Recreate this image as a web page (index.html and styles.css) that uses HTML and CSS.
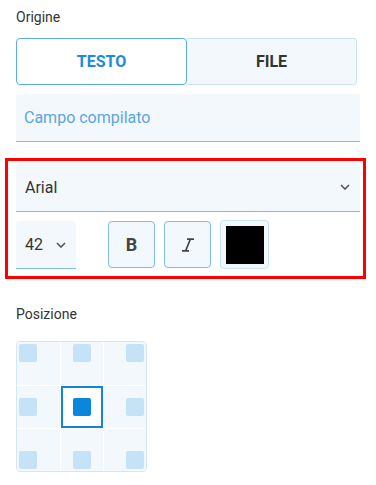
FILE: index.html
```html
<!DOCTYPE html>
<html lang="it">
<head>
<meta charset="utf-8">
<link rel="stylesheet" href="styles.css">
</head>
<body>
<div class="panel">
  <div class="label">Origine</div>
  <div class="toggle">
    <button class="tog active">TESTO</button>
    <button class="tog">FILE</button>
  </div>
  <div class="field">Campo compilato</div>

  <div class="highlight">
    <div class="select font-select">
      <span>Arial</span>
      <svg class="chev" width="10" height="6" viewBox="0 0 10 6"><path d="M1 1l4 4 4-4" fill="none" stroke="#555" stroke-width="1.6"/></svg>
    </div>
    <div class="row">
      <div class="select size-select">
        <span>42</span>
        <svg class="chev" width="10" height="6" viewBox="0 0 10 6"><path d="M1 1l4 4 4-4" fill="none" stroke="#555" stroke-width="1.6"/></svg>
      </div>
      <button class="sq bold">B</button>
      <button class="sq italic" aria-label="Corsivo">
        <svg width="14" height="14" viewBox="0 0 14 14"><path d="M6 1.2h7M1 12.8h7M9.3 1.2L4.7 12.8" fill="none" stroke="#444" stroke-width="1.7"/></svg>
      </button>
      <div class="sq color"><div class="swatch"></div></div>
    </div>
  </div>

  <div class="label pos-label">Posizione</div>
  <div class="grid">
    <div class="cell tl"><i></i></div>
    <div class="cell tc"><i></i></div>
    <div class="cell tr"><i></i></div>
    <div class="cell ml"><i></i></div>
    <div class="cell mc sel"><i></i></div>
    <div class="cell mr"><i></i></div>
    <div class="cell bl"><i></i></div>
    <div class="cell bc"><i></i></div>
    <div class="cell br"><i></i></div>
  </div>
</div>
</body>
</html>
```

FILE: styles.css
```css
* { box-sizing: border-box; }
html, body { margin: 0; padding: 0; background: #fff; }
body { font-family: Roboto, "Noto Sans", sans-serif; color: #333; }
.panel { width: 376px; padding: 9px 16px 0 16px; }
.label { font-size: 14px; line-height: 16px; color: #333; font-weight: 400; }
.toggle { display: flex; margin-top: 13px; width: 341px; height: 47px; }
.tog {
  flex: 1; font-family: Roboto, sans-serif; font-weight: 700; font-size: 16px;
  border: 1px solid #c9e3f6; background: #f3f8fc; color: #333; padding: 0;
}
.tog:first-child { border-radius: 4px 0 0 4px; }
.tog:last-child { border-radius: 0 4px 4px 0; border-left: none; }
.tog.active { background: #fff; color: #1c8ae0; border: 1.5px solid #5aaee8; border-radius: 4px; }
.field {
  margin-top: 9px; width: 344px; height: 48px; background: #f3f8fc;
  border-bottom: 1px solid #7fbde8; color: #5aa6df; font-size: 16px;
  padding: 0 8px; display: flex; align-items: center;
}
.highlight {
  margin: 16px 0 0 -11px; width: 361px; height: 121px;
  border: 3px solid #f00; padding: 2px 4px 0 8px;
}
.select {
  background: #f3f8fc; border-bottom: 1px solid #7fbde8; border-radius: 4px 4px 0 0;
  display: flex; align-items: center; justify-content: space-between;
  font-size: 16px; color: #333; padding: 0 9px;
}
.font-select { height: 49px; width: 344px; }
.font-select .chev { margin-right: 1px; }
.row { display: flex; align-items: center; margin-top: 8px; height: 49px; }
.size-select { width: 60px; height: 48px; padding: 0 10px 0 9px; align-self: flex-start; margin-top: 1px; }
.sq {
  width: 47px; height: 47px; border: 1px solid #7fbde8; border-radius: 4px;
  background: #f3f8fc; padding: 0; color: #444; font-size: 18px;
  display: flex; align-items: center; justify-content: center;
}
.bold { margin-left: 32px; font-family: Roboto, sans-serif; font-weight: 700; }
.italic { margin-left: 9px; }
.color { margin-left: 9px; border-color: #c9e3f6; width: 49px; height: 49px; }
.swatch { width: 38px; height: 38px; background: #000; }
.pos-label { margin-top: 27px; }
.grid {
  margin-top: 19px; width: 131px; height: 131px;
  display: grid; grid-template-columns: 43px 42px 42px; grid-template-rows: 43px 42px 42px;
  border: 1px solid #d2e7f7; border-radius: 4px; background: #fff; gap: 1px; overflow: hidden;
}
.cell { background: #f3f8fc; display: flex; padding: 2px; }
.cell i { display: block; width: 18px; height: 18px; background: #c5e2f7; border-radius: 2px; }
.tl { justify-content: flex-start; align-items: flex-start; }
.tc { justify-content: center; align-items: flex-start; }
.tr { justify-content: flex-end; align-items: flex-start; }
.ml { justify-content: flex-start; align-items: center; }
.mc { justify-content: center; align-items: center; }
.mr { justify-content: flex-end; align-items: center; }
.bl { justify-content: flex-start; align-items: flex-end; }
.bc { justify-content: center; align-items: flex-end; }
.br { justify-content: flex-end; align-items: flex-end; }
.sel { background: #fff; border: 2px solid #1484d9; }
.sel i { background: #0a86dc; }
```
